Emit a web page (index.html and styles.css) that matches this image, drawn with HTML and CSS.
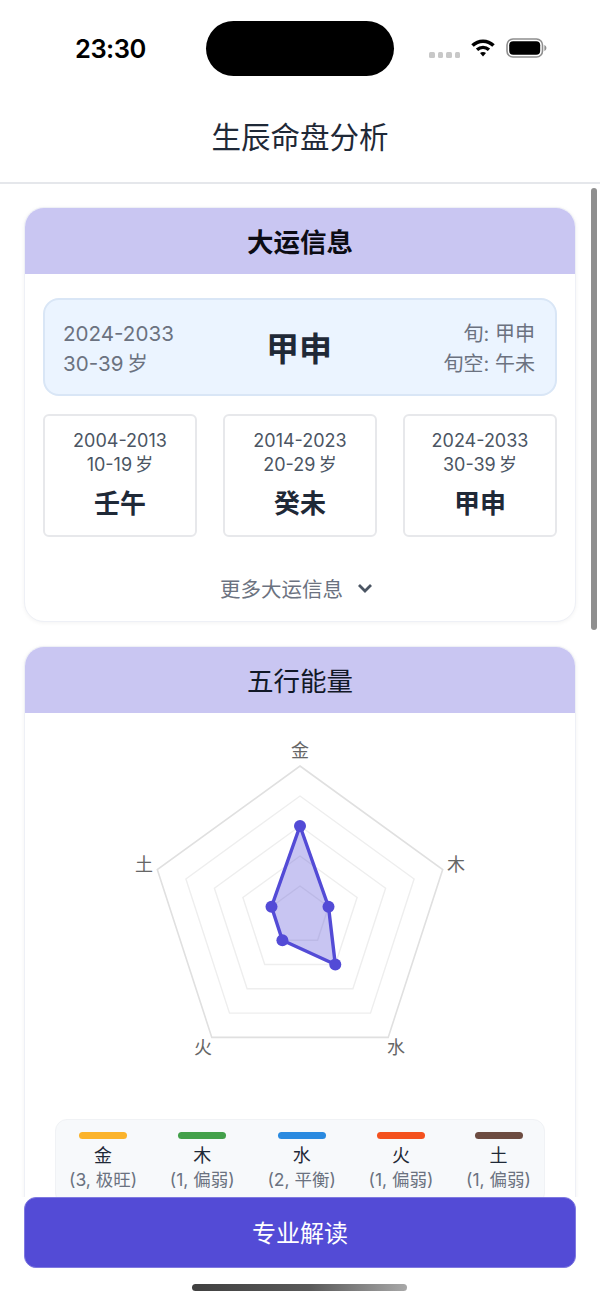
FILE: index.html
```html
<!DOCTYPE html>
<html lang="zh-CN">
<head>
    <meta charset="UTF-8">
    <meta name="viewport" content="width=device-width, initial-scale=1.0">
    <title>生辰命盘分析</title>
    <link rel="stylesheet" href="styles.css">
</head>
<body>
<div class="page">
    <!-- Status bar -->
    <div class="status-bar">
        <div class="time">23:30</div>
        <div class="island"></div>
        <div class="status-icons">
            <div class="signal"><span></span><span></span><span></span><span></span></div>
            <svg class="wifi" viewBox="0 0 24 18" width="24" height="18">
                <path class="wifi-arc" d="M1.5 6.5C7.5 .8 16.5 .8 22.5 6.5"/>
                <path class="wifi-arc mid" d="M6 10.8C9.6 7.6 14.4 7.6 18 10.8"/>
                <path class="wifi-dot" d="M9 14C10.8 12.6 13.2 12.6 15 14L12 17.6Z"/>
            </svg>
            <svg class="battery" viewBox="0 0 41 20" width="41" height="20">
                <rect class="battery-shell" x="1" y="1" width="35.5" height="18" rx="6"/>
                <rect class="battery-level" x="3.2" y="3.2" width="31" height="13.6" rx="4"/>
                <path class="battery-cap" d="M38.4 7v6c1.2-.5 2-1.7 2-3s-.8-2.5-2-3z"/>
            </svg>
        </div>
    </div>

    <!-- Nav -->
    <div class="nav">生辰命盘分析</div>

    <div class="content">
        <!-- Dayun card -->
        <section class="card">
            <h2 class="card-title strong">大运信息</h2>
            <div class="dayun-body">
                <div class="current">
                    <div class="current-side">
                        <div>2024-2033</div>
                        <div>30-39&thinsp;岁</div>
                    </div>
                    <div class="current-name">甲申</div>
                    <div class="current-side right">
                        <div>旬: 甲申</div>
                        <div>旬空: 午未</div>
                    </div>
                </div>
                <div class="periods">
                    <div class="period">
                        <div class="period-text">2004-2013</div>
                        <div class="period-text">10-19&thinsp;岁</div>
                        <div class="period-name">壬午</div>
                    </div>
                    <div class="period">
                        <div class="period-text">2014-2023</div>
                        <div class="period-text">20-29&thinsp;岁</div>
                        <div class="period-name">癸未</div>
                    </div>
                    <div class="period">
                        <div class="period-text">2024-2033</div>
                        <div class="period-text">30-39&thinsp;岁</div>
                        <div class="period-name">甲申</div>
                    </div>
                </div>
                <div class="more">
                    <span>更多大运信息</span>
                    <svg class="chevron" viewBox="0 0 16 10" width="16" height="10">
                        <path d="M2 2l6 6 6-6"/>
                    </svg>
                </div>
            </div>
        </section>

        <!-- Wuxing card -->
        <section class="card">
            <h2 class="card-title">五行能量</h2>
            <div class="wuxing-body">
                <svg class="radar" viewBox="0 0 400 380" width="400" height="380">
                    <polygon class="ring outer" points="200,33 342.7,136.6 288.2,304.4 111.8,304.4 57.3,136.6"/>
                    <polygon class="ring" points="200,63 314.1,145.9 270.5,280.1 129.5,280.1 85.9,145.9"/>
                    <polygon class="ring" points="200,93 285.6,155.2 252.9,255.8 147.1,255.8 114.4,155.2"/>
                    <polygon class="ring" points="200,123 257.1,164.5 235.3,231.5 164.7,231.5 142.9,164.5"/>
                    <polygon class="ring" points="200,153 228.5,173.7 217.6,207.3 182.4,207.3 171.5,173.7"/>
                    <polygon class="data" points="200,93 228.5,173.7 235.3,231.5 182.4,207.3 171.5,173.7"/>
                    <circle class="point" cx="200" cy="93" r="6"/>
                    <circle class="point" cx="228.5" cy="173.7" r="6"/>
                    <circle class="point" cx="235.3" cy="231.5" r="6"/>
                    <circle class="point" cx="182.4" cy="207.3" r="6"/>
                    <circle class="point" cx="171.5" cy="173.7" r="6"/>
                    <text class="axis" x="200" y="17">金</text>
                    <text class="axis" x="356" y="131">木</text>
                    <text class="axis" x="296" y="314">水</text>
                    <text class="axis" x="103" y="314">火</text>
                    <text class="axis" x="44" y="131">土</text>
                </svg>
                <div class="legend">
                    <div class="legend-item">
                        <div class="bar gold"></div>
                        <div class="legend-name">金</div>
                        <div class="legend-value">(3, 极旺)</div>
                    </div>
                    <div class="legend-item">
                        <div class="bar wood"></div>
                        <div class="legend-name">木</div>
                        <div class="legend-value">(1, 偏弱)</div>
                    </div>
                    <div class="legend-item">
                        <div class="bar water"></div>
                        <div class="legend-name">水</div>
                        <div class="legend-value">(2, 平衡)</div>
                    </div>
                    <div class="legend-item">
                        <div class="bar fire"></div>
                        <div class="legend-name">火</div>
                        <div class="legend-value">(1, 偏弱)</div>
                    </div>
                    <div class="legend-item">
                        <div class="bar earth"></div>
                        <div class="legend-name">土</div>
                        <div class="legend-value">(1, 偏弱)</div>
                    </div>
                </div>
            </div>
        </section>
    </div>

    <!-- Bottom button -->
    <div class="footer">
        <button class="read-btn">专业解读</button>
    </div>

    <div class="scrollbar"></div>
    <div class="home-indicator"></div>
</div>
</body>
</html>
```

FILE: styles.css
```css
* {
    margin: 0;
    padding: 0;
    box-sizing: border-box;
}

body {
    background-color: #fff;
    font-family: Inter, "Noto Sans CJK SC", sans-serif;
    color: #1f2937;
}

.page {
    position: relative;
    display: flex;
    flex-direction: column;
    width: 600px;
    height: 1304px;
    overflow: hidden;
    background-color: #fff;
}

/* Status bar */
.status-bar {
    display: flex;
    align-items: center;
    flex-shrink: 0;
    height: 92px;
    padding: 0 53px 0 75px;
}

.time {
    width: 131px;
    margin-top: 4px;
    font-size: 25.5px;
    font-weight: 600;
    color: #000;
    letter-spacing: -0.5px;
}

.island {
    width: 188px;
    height: 55px;
    margin-top: 5px;
    background-color: #000;
    border-radius: 28px;
}

.status-icons {
    display: flex;
    align-items: center;
    margin-left: auto;
    margin-top: 4px;
}

.signal {
    display: flex;
    gap: 3px;
    margin: 14px 11px 0 0;
}

.signal span {
    width: 5.5px;
    height: 5.5px;
    background-color: #c8c8c8;
    border-radius: 1.5px;
}

.wifi {
    margin-right: 11px;
}

.wifi-arc {
    fill: none;
    stroke: #000;
    stroke-width: 3.6;
}

.wifi-arc.mid {
    stroke-width: 3.4;
}

.wifi-dot {
    fill: #000;
}

.battery-shell {
    fill: none;
    stroke: #8e8e8e;
    stroke-width: 1.6;
}

.battery-level {
    fill: #000;
}

.battery-cap {
    fill: #8e8e8e;
}

/* Nav */
.nav {
    flex-shrink: 0;
    height: 92px;
    padding-top: 24px;
    font-size: 29.5px;
    line-height: 42px;
    text-align: center;
    color: #1f2937;
    border-bottom: 2px solid #e5e7eb;
}

/* Scroll area */
.content {
    flex: 1;
    min-height: 0;
    overflow: hidden;
    padding: 23px 24px 0;
}

.card {
    margin-bottom: 24px;
    border: 1px solid #eef0f6;
    border-radius: 20px;
    box-shadow: 0 1px 4px rgba(0, 0, 0, 0.05);
    overflow: hidden;
    background-color: #fff;
}

.card-title {
    height: 66px;
    font-size: 26.5px;
    font-weight: 400;
    line-height: 69px;
    text-align: center;
    color: #111827;
    background-color: #c9c6f2;
}

.card-title.strong {
    font-weight: 700;
    color: #0c0c14;
}

/* Dayun */
.dayun-body {
    padding: 24px 18px 0;
}

.current {
    display: flex;
    align-items: center;
    justify-content: space-between;
    height: 98px;
    padding: 0 20px 0 18px;
    background-color: #ebf4ff;
    border: 2px solid #d9e6f6;
    border-radius: 16px;
}

.current-side {
    width: 170px;
    margin-top: 4px;
    font-size: 20.6px;
    line-height: 30px;
    color: #6b7280;
}

.current-side.right {
    font-size: 20px;
    text-align: right;
}

.current-name {
    font-size: 33px;
    font-weight: 700;
    color: #1f2937;
}

.periods {
    display: flex;
    justify-content: space-between;
    margin-top: 18px;
}

.period {
    width: 154px;
    height: 123px;
    padding-top: 13px;
    text-align: center;
    border: 2px solid #e7e8eb;
    border-radius: 6px;
}

.period-text {
    font-size: 18px;
    line-height: 24px;
    color: #4b5563;
}

.period-name {
    margin-top: 8px;
    font-size: 26px;
    font-weight: 700;
    line-height: 38px;
    color: #1f2937;
}

.more {
    display: flex;
    align-items: center;
    justify-content: center;
    gap: 14px;
    height: 84px;
    padding: 18px 7px 0 0;
    font-size: 20.5px;
    color: #6b7280;
}

.chevron path {
    fill: none;
    stroke: #4b5563;
    stroke-width: 2.8;
}

/* Wuxing */
.wuxing-body {
    padding: 20px 30px 30px;
}

.radar {
    display: block;
    margin: 0 auto;
}

.ring {
    fill: none;
    stroke: #eeeeee;
    stroke-width: 1.4;
}

.ring.outer {
    stroke: #e0e0e0;
    stroke-width: 1.6;
}

.data {
    fill: rgba(83, 75, 214, 0.32);
    stroke: #534bd6;
    stroke-width: 3.4;
    stroke-linejoin: round;
}

.point {
    fill: #534bd6;
}

.axis {
    font-size: 18px;
    fill: #666;
    text-anchor: middle;
    dominant-baseline: central;
}

.legend {
    display: flex;
    justify-content: space-between;
    margin-top: 6px;
    padding: 12px 13px;
    background-color: #f7f9fb;
    border: 1px solid #f0f2f5;
    border-radius: 12px;
}

.legend-item {
    display: flex;
    flex-direction: column;
    align-items: center;
}

.bar {
    width: 48px;
    height: 7px;
    border-radius: 4px;
}

.gold { background-color: #fbb32b; }
.wood { background-color: #43a04a; }
.water { background-color: #2a8ae0; }
.fire { background-color: #f4511e; }
.earth { background-color: #6d4c41; }

.legend-name {
    margin-top: 5px;
    font-size: 18px;
    line-height: 24px;
    color: #1f2937;
}

.legend-value {
    font-size: 17.5px;
    line-height: 24px;
    color: #6b7280;
}

/* Bottom */
.footer {
    flex-shrink: 0;
    height: 107px;
    padding: 0 24px;
    background-color: #fff;
}

.read-btn {
    display: block;
    width: 100%;
    height: 71px;
    padding-bottom: 3px;
    font-family: inherit;
    font-size: 24px;
    color: #fff;
    background-color: #534bd6;
    border: 1px solid #7f79e0;
    border-radius: 12px;
}

.scrollbar {
    position: absolute;
    top: 188px;
    right: 3px;
    width: 6px;
    height: 442px;
    background-color: #8f8f8f;
    border-radius: 3px;
}

.home-indicator {
    position: absolute;
    left: 192px;
    bottom: 13px;
    width: 215px;
    height: 7px;
    background: linear-gradient(to right, #404040, #5a5a5a 55%, #a8a8a8);
    border-radius: 4px;
}
```
